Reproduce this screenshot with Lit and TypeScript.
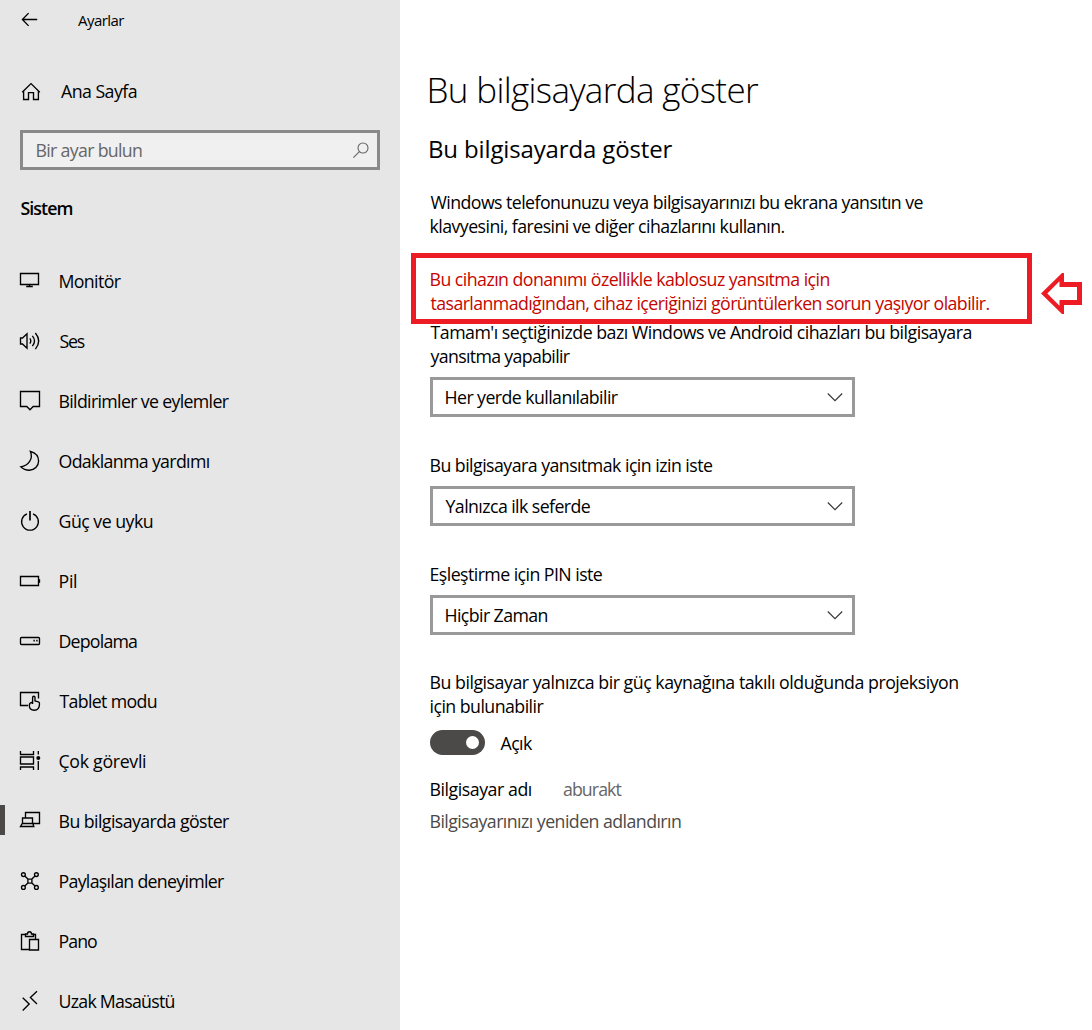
import { LitElement, html, svg, css } from 'lit';
import { customElement, property, query } from 'lit/decorators.js';
import { classMap } from 'lit/directives/class-map.js';

const icons = {
  back: svg`<path d="M19.2 11.5H4.4M10.6 5.1 4.4 11.5l6.2 6.4" />`,
  home: svg`<path d="M4.2 13.2 13 4.6l8.8 8.6M5.6 12v8.5h4.9v-6.9h5v6.9h4.9V12" />`,
  display: svg`<path d="M2.5 4.5h18v11h-18zM11.5 15.5v2M8.2 17.5h6.6" />`,
  sound: svg`<path d="M2.5 9h2L9 4.8v14.4L4.5 15h-2zM11.8 9.4q2 2.6 0 5.2M14.4 6.9q4.2 5.1 0 10.2M17.4 4q6.6 8 0 16.2" />`,
  message: svg`<path d="M2.5 2.5h19v15h-6.3l-3.2 3.2-3.2-3.2H2.5z" />`,
  moon: svg`<path d="M12.4 2.4C18 4 20.6 7.6 20.6 12a9.2 9.2 0 0 1-9.2 9.2c-3.4 0-6.2-1-8.6-3.4C10.600 16.8 15.4 9.6 12.4 2.4z" />`,
  power: svg`<path d="M9 4.900a8.4 8.4 0 1 0 6 0" /><path class="thick" d="M12 2v9.600" />`,
  battery: svg`<path d="M2.5 7.5h18v9h-18z" /><path class="thick" d="M21.3 10.2v3.6" />`,
  storage: svg`<rect x="2.5" y="8.5" width="19" height="7" rx="1" /><path class="thick" d="M15.4 11.6h1.4M18.2 11.6h1.4" />`,
  tablet: svg`<path d="M10 16.5H2.5v-13h18v6" /><path d="M14.6 15V8.6c0-1.8 2.4-1.8 2.4 0V12l3.4.9q1.3.4 1.1 2-.1 6.3-5.2 6.3c-3 0-5-2-5-5 0-1.5.6-2.6 3.3-3" />`,
  multitask: svg`<path d="M2.5 2v3.5h13V2M2.5 8h13v7h-13zM2.5 21v-3h13v3M20.3 2v3.5M20.3 12v9" /><circle class="solid" cx="20.3" cy="9" r="2" />`,
  project: svg`<path d="M7.5 8.5v-5h14v11h-6.5M4.5 14.5V9h10v5.5M4.3 14.5h10.6l.9 3H2.5z" />`,
  share: svg`<circle cx="5.4" cy="5.6" r="1.9" /><circle cx="18.4" cy="5.6" r="1.9" /><circle cx="5.4" cy="18.4" r="1.9" /><circle cx="18.4" cy="18.4" r="1.9" /><path d="M9.9 10.1h4v4h-4zM6.8 7l3.1 3.1M17 7l-3.1 3.1M6.8 17l3.1-2.9M17 17l-3.1-2.9" />`,
  paste: svg`<path d="M11 20.5H3.5v-15h4M14.5 5.5h3V10M7.5 7.5V5h2c0-3 4-3 4 0h2v2.5zM11.5 10.5h9V21h-9z" />`,
  remote: svg`<path d="m4.7 8.7 6.5 6.4-6.5 6.5M19 2.2l-6.6 6.4L19 15" />`,
  search: svg`<circle cx="14" cy="10" r="5" /><path d="m10.4 13.6-6 6" />`,
  chevron: svg`<path d="m4.8 8.5 7.2 7.2 7.2-7.2" />`,
};

type IconName = keyof typeof icons;

interface NavItem {
  icon: IconName;
  label: string;
  width: number;
  selected?: boolean;
}

const navItems: NavItem[] = [
  { icon: 'display', label: 'Monitör', width: 61.2 },
  { icon: 'sound', label: 'Ses', width: 25.2 },
  { icon: 'message', label: 'Bildirimler ve eylemler', width: 169.2 },
  { icon: 'moon', label: 'Odaklanma yardımı', width: 149.2 },
  { icon: 'power', label: 'Güç ve uyku', width: 93.2 },
  { icon: 'battery', label: 'Pil', width: 16.6 },
  { icon: 'storage', label: 'Depolama', width: 77.6 },
  { icon: 'tablet', label: 'Tablet modu', width: 97.2 },
  { icon: 'multitask', label: 'Çok görevli', width: 86.6 },
  { icon: 'project', label: 'Bu bilgisayarda göster', width: 169.6, selected: true },
  { icon: 'share', label: 'Paylaşılan deneyimler', width: 164.6 },
  { icon: 'paste', label: 'Pano', width: 37.6 },
  { icon: 'remote', label: 'Uzak Masaüstü', width: 115 },
];

// One line of text, tracked so that its ink fills the given width
// and starts exactly at the left edge of the element.
@customElement('text-line')
export class TextLine extends LitElement {
  static styles = css`
    :host {
      display: block;
      white-space: nowrap;
    }
    .run {
      display: inline-block;
    }
  `;

  @property() text = '';
  @property({ type: Number }) width = 0;
  @query('.run') run!: HTMLElement;

  updated() {
    const style = getComputedStyle(this);
    const ctx = document.createElement('canvas').getContext('2d')!;
    ctx.font = `${style.fontWeight} ${style.fontSize} ${style.fontFamily}`;
    const box = ctx.measureText(this.text);
    const ink = box.actualBoundingBoxLeft + box.actualBoundingBoxRight;
    const tracking = (this.width - ink) / (this.text.length - 1);
    this.run.style.letterSpacing = `${tracking.toFixed(3)}px`;
    this.run.style.marginLeft = `${box.actualBoundingBoxLeft.toFixed(2)}px`;
  }

  render() {
    return html`<span class="run">${this.text}</span>`;
  }
}

@customElement('line-icon')
export class LineIcon extends LitElement {
  static styles = css`
    :host {
      display: block;
      flex: none;
      width: 24px;
      height: 24px;
    }
    svg {
      display: block;
      fill: none;
      stroke: currentColor;
      stroke-width: var(--icon-stroke, 1.35);
    }
    .thick {
      stroke-width: 1.7;
    }
    .solid {
      fill: currentColor;
      stroke: none;
    }
  `;

  @property() name: IconName = 'home';

  render() {
    return html`<svg width="24" height="24" viewBox="0 0 24 24">${icons[this.name]}</svg>`;
  }
}

@customElement('select-box')
export class SelectBox extends LitElement {
  static styles = css`
    :host {
      display: block;
    }
    .box {
      box-sizing: border-box;
      display: flex;
      align-items: center;
      justify-content: space-between;
      width: 425px;
      height: 40px;
      padding: 0 5px 0 12.5px;
      border: 3px solid #999;
      background: #fff;
    }
    line-icon {
      --icon-stroke: 1.1;
      color: #333;
    }
  `;

  @property() value = '';
  @property({ type: Number }) width = 0;

  render() {
    return html`
      <div class="box">
        <text-line .text=${this.value} .width=${this.width}></text-line>
        <line-icon name="chevron"></line-icon>
      </div>
    `;
  }
}

@customElement('app-root')
export class AppRoot extends LitElement {
  static styles = css`
    :host {
      display: flex;
      width: 1092px;
      height: 1030px;
      overflow: hidden;
      background: #fff;
      color: #000;
      font: 17.75px/24px 'Open Sans', 'Noto Sans', sans-serif;
    }
    .sidebar {
      flex: none;
      width: 400px;
      background: #e6e6e6;
    }
    .titlebar {
      display: flex;
      align-items: center;
      gap: 36px;
      height: 24px;
      padding: 8px 0 0 18px;
      font-size: 15px;
    }
    .home {
      display: flex;
      align-items: center;
      gap: 19px;
      padding-left: 18px;
      margin-top: 47px;
    }
    .search {
      box-sizing: border-box;
      display: flex;
      align-items: center;
      justify-content: space-between;
      width: 360px;
      height: 40px;
      margin: 27px 0 0 20px;
      padding: 0 4px 0 13.5px;
      border: 3px solid #8a8a8a;
      background: #f0f0f0;
      color: #666;
      --icon-stroke: 1.1;
    }
    .group {
      margin: 26px 0 31px 20.5px;
      font-weight: 600;
    }
    .nav-item {
      display: flex;
      align-items: center;
      gap: 17.5px;
      height: 60px;
      padding-left: 18px;
    }
    .nav-item.selected {
      padding-left: 0;
    }
    .nav-item.selected::before {
      content: '';
      width: 5px;
      height: 30px;
      margin: -2px -4.5px 0 0;
      background: #4c4a48;
    }
    .nav-item.selected line-icon {
      margin-left: 0;
    }
    .content {
      padding: 66px 0 0 30.5px;
    }
    .title {
      margin-left: -1px;
      font-size: 35px;
      line-height: 48px;
      font-weight: 350;
    }
    .subtitle {
      margin: 19px 0 25px -0.5px;
      font-size: 24px;
      line-height: 32px;
    }
    .notice {
      position: relative;
      margin: 29px 0 5px;
      color: #c50500;
    }
    .frame {
      position: absolute;
      box-sizing: border-box;
      left: -19.5px;
      top: -14px;
      width: 621px;
      height: 71px;
      border: 5px solid #ed1c24;
    }
    .arrow {
      position: absolute;
      left: 610.5px;
      top: 6px;
      fill: #ed1c24;
    }
    select-box {
      margin: 9px 0 36px -0.5px;
    }
    .last {
      margin-bottom: 35px;
    }
    .switch-row {
      display: flex;
      align-items: center;
      gap: 15.5px;
      height: 25px;
      margin: 12px 0 22px -0.5px;
    }
    .switch {
      box-sizing: border-box;
      display: flex;
      align-items: center;
      justify-content: flex-end;
      width: 55px;
      height: 25px;
      padding-right: 6px;
      border-radius: 12.5px;
      background: #4c4a48;
    }
    .knob {
      width: 13px;
      height: 13px;
      border-radius: 50%;
      background: #fff;
    }
    .name-row {
      display: grid;
      grid-template-columns: 132.5px auto;
    }
    .pc-name {
      color: #666;
    }
    .link {
      margin-top: 8px;
      color: #4c4a48;
    }
    .nav-item.selected::before {
      margin-right: -4.5px;
    }
    .nav-item.selected line-icon {
      margin-left: 0;
    }
  `;

  line(text: string, width: number) {
    return html`<text-line .text=${text} .width=${width}></text-line>`;
  }

  renderNavItem(item: NavItem) {
    return html`
      <div class=${classMap({ 'nav-item': true, selected: !!item.selected })}>
        <line-icon .name=${item.icon}></line-icon>
        ${this.line(item.label, item.width)}
      </div>
    `;
  }

  render() {
    return html`
      <nav class="sidebar">
        <div class="titlebar">
          <line-icon name="back"></line-icon>
          ${this.line('Ayarlar', 46.3)}
        </div>
        <div class="home">
          <line-icon name="home"></line-icon>
          ${this.line('Ana Sayfa', 75.7)}
        </div>
        <div class="search">
          ${this.line('Bir ayar bulun', 105.5)}
          <line-icon name="search"></line-icon>
        </div>
        <div class="group">${this.line('Sistem', 52)}</div>
        ${navItems.map((item) => this.renderNavItem(item))}
      </nav>
      <main class="content">
        <div class="title">${this.line('Bu bilgisayarda göster', 329.5)}</div>
        <div class="subtitle">${this.line('Bu bilgisayarda göster', 242.5)}</div>
        ${this.line('Windows telefonunuzu veya bilgisayarınızı bu ekrana yansıtın ve', 493)}
        ${this.line('klavyesini, faresini ve diğer cihazlarını kullanın.', 354)}
        <div class="notice">
          ${this.line('Bu cihazın donanımı özellikle kablosuz yansıtma için', 399)}
          ${this.line('tasarlanmadığından, cihaz içeriğinizi görüntülerken sorun yaşıyor olabilir.', 559)}
          <div class="frame"></div>
          <svg class="arrow" width="41" height="41" viewBox="0 0 41 41">
            <path
              fill-rule="evenodd"
              d="M0 20.5 21 0h2v9h18v23H23v9h-2zM6.3 20.5l12.2 12.2V27H36V14H18.5V8.3z"
            />
          </svg>
        </div>
        ${this.line("Tamam'ı seçtiğinizde bazı Windows ve Android cihazları bu bilgisayara", 541)}
        ${this.line('yansıtma yapabilir', 139.3)}
        <select-box value="Her yerde kullanılabilir" width="172.3"></select-box>
        ${this.line('Bu bilgisayara yansıtmak için izin iste', 282.5)}
        <select-box value="Yalnızca ilk seferde" width="145.3"></select-box>
        ${this.line('Eşleştirme için PIN iste', 172.3)}
        <select-box class="last" value="Hiçbir Zaman" width="102"></select-box>
        ${this.line('Bu bilgisayar yalnızca bir güç kaynağına takılı olduğunda projeksiyon', 527.8)}
        ${this.line('için bulunabilir', 113)}
        <div class="switch-row">
          <div class="switch"><div class="knob"></div></div>
          ${this.line('Açık', 32.5)}
        </div>
        <div class="name-row">
          ${this.line('Bilgisayar adı', 100.3)}
          <div class="pc-name">${this.line('aburakt', 58.5)}</div>
        </div>
        <div class="link">${this.line('Bilgisayarınızı yeniden adlandırın', 250.5)}</div>
      </main>
    `;
  }
}
